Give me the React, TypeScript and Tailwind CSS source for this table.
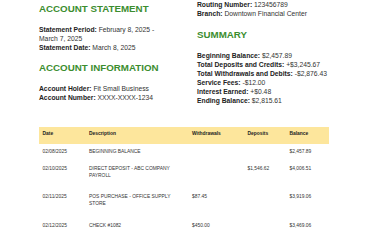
import React from "react"

type Txn = {
  date: string
  description: string
  withdrawal?: string
  deposit?: string
  balance: string
  tall?: boolean
}

const txns: Txn[] = [
  { date: "02/08/2025", description: "BEGINNING BALANCE", balance: "$2,457.89" },
  { date: "02/10/2025", description: "DIRECT DEPOSIT - ABC COMPANY PAYROLL", deposit: "$1,546.62", balance: "$4,006.51", tall: true },
  { date: "02/11/2025", description: "POS PURCHASE - OFFICE SUPPLY STORE", withdrawal: "$87.45", balance: "$3,919.06", tall: true },
  { date: "02/12/2025", description: "CHECK #1082", withdrawal: "$450.00", balance: "$3,469.06" },
]

function Line({ label, value }: { label: string; value: string }) {
  return (
    <div className="leading-[9px]">
      <b className="text-[#222]">{label}:</b> <span className="text-[#333]">{value}</span>
    </div>
  )
}

function SectionTitle({ children, className = "" }: { children: React.ReactNode; className?: string }) {
  return <h2 className={`text-[9.75px] leading-[13px] font-bold text-[#3c8d2f] ${className}`}>{children}</h2>
}

export default function App() {
  return (
    <div className="w-[370px] h-[240px] overflow-hidden bg-white pl-[39px] pt-[2px] font-['Liberation_Sans',Arial,sans-serif]">
      <div className="grid grid-cols-[130px_1fr] gap-x-[28px] text-[6.75px]">
        <div>
          <SectionTitle>ACCOUNT STATEMENT</SectionTitle>
          <div className="mt-[9.5px]">
            <Line label="Statement Period" value="February 8, 2025 - March 7, 2025" />
            <Line label="Statement Date" value="March 8, 2025" />
          </div>
          <SectionTitle className="mt-[9.5px]">ACCOUNT INFORMATION</SectionTitle>
          <div className="mt-[9.5px]">
            <Line label="Account Holder" value="Fit Small Business" />
            <Line label="Account Number" value="XXXX-XXXX-1234" />
          </div>
        </div>
        {/* bank block continues from the previous page area */}
        <div className="mt-[-2px]">
          <Line label="Routing Number" value="123456789" />
          <Line label="Branch" value="Downtown Financial Center" />
          <SectionTitle className="mt-[10px]">SUMMARY</SectionTitle>
          <div className="mt-[10px]">
            <Line label="Beginning Balance" value="$2,457.89" />
            <Line label="Total Deposits and Credits" value="+$3,245.67" />
            <Line label="Total Withdrawals and Debits" value="-$2,876.43" />
            <Line label="Service Fees" value="-$12.00" />
            <Line label="Interest Earned" value="+$0.48" />
            <Line label="Ending Balance" value="$2,815.61" />
          </div>
        </div>
      </div>

      <table className="mt-[22px] ml-[-0.5px] w-[290px] table-fixed border-collapse text-[4.9px] leading-[7px] text-[#333]">
        <colgroup>
          <col className="w-[46.5px]" />
          <col className="w-[103px]" />
          <col className="w-[55.5px]" />
          <col className="w-[42px]" />
          <col />
        </colgroup>
        <thead>
          <tr className="h-[16.5px] bg-[#fde69c]">
            {["Date", "Description", "Withdrawals", "Deposits", "Balance"].map((h) => (
              <th key={h} className="px-[4px] pt-[2.5px] align-top text-left font-bold text-[#222]">{h}</th>
            ))}
          </tr>
        </thead>
        <tbody>
          {txns.map((t) => (
            <tr key={t.date} className={t.tall ? "h-[28.5px]" : "h-[17.3px]"}>
              <td className="px-[4px] pt-[4.2px] align-top">{t.date}</td>
              <td className="px-[4px] pt-[4.2px] align-top">{t.description}</td>
              <td className="px-[4px] pt-[4.2px] align-top">{t.withdrawal}</td>
              <td className="px-[4px] pt-[4.2px] align-top">{t.deposit}</td>
              <td className="px-[4px] pt-[4.2px] align-top">{t.balance}</td>
            </tr>
          ))}
        </tbody>
      </table>
    </div>
  )
}
